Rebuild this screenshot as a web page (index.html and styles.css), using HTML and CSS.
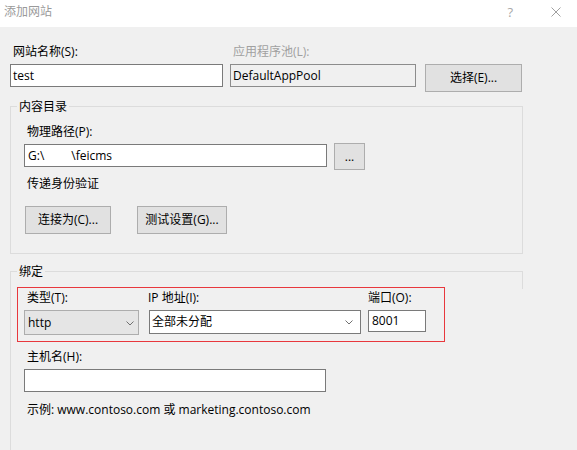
FILE: index.html
```html
<!DOCTYPE html>
<html lang="zh-CN">
<head>
<meta charset="utf-8">
<title>添加网站</title>
<link rel="stylesheet" href="styles.css">
</head>
<body>
<div class="titlebar">
  <span class="title">添加网站</span>
  <span class="help">?</span>
  <svg class="close" width="10" height="10" viewBox="0 0 10 10"><path d="M0.5 0.5 L9.5 9.5 M9.5 0.5 L0.5 9.5" stroke="#a0a0a0" stroke-width="1" fill="none"/></svg>
</div>
<main class="dialog">
  <div class="site-row">
    <div class="field name-field">
      <label class="lbl">网站名称(S):</label>
      <div class="textbox">test</div>
    </div>
    <div class="field pool-field">
      <label class="lbl disabled">应用程序池(L):</label>
      <div class="textbox readonly">DefaultAppPool</div>
    </div>
    <button class="btn btn-select">选择(E)...</button>
  </div>

  <section class="group group-content">
    <div class="legend">内容目录</div>
    <label class="lbl path-label">物理路径(P):</label>
    <div class="path-row">
      <div class="textbox path-box">G:\<span class="redact"></span>\feicms</div>
      <button class="btn btn-browse">...</button>
    </div>
    <div class="lbl auth-label">传递身份验证</div>
    <div class="btn-row">
      <button class="btn btn-connect">连接为(C)...</button>
      <button class="btn btn-test">测试设置(G)...</button>
    </div>
  </section>

  <section class="group group-binding">
    <div class="legend">绑定</div>
    <div class="highlight">
      <div class="col col-type">
        <label class="lbl">类型(T):</label>
        <div class="select select-type"><span>http</span>
          <svg width="8" height="5" viewBox="0 0 8 5"><polyline points="0.5,0.5 4,4 7.5,0.5" stroke="#707070" fill="none"/></svg>
        </div>
      </div>
      <div class="col col-ip">
        <label class="lbl">IP 地址(I):</label>
        <div class="select select-ip"><span>全部未分配</span>
          <svg width="8" height="5" viewBox="0 0 8 5"><polyline points="0.5,0.5 4,4 7.5,0.5" stroke="#707070" fill="none"/></svg>
        </div>
      </div>
      <div class="col col-port">
        <label class="lbl">端口(O):</label>
        <div class="textbox port-box">8001</div>
      </div>
    </div>
    <label class="lbl host-label">主机名(H):</label>
    <div class="textbox host-box"></div>
    <div class="lbl example">示例: www.contoso.com 或 marketing.contoso.com</div>
  </section>
</main>
</body>
</html>
```

FILE: styles.css
```css
* { box-sizing: border-box; }
html, body { margin: 0; padding: 0; }
body {
  width: 577px;
  height: 450px;
  overflow: hidden;
  background: #f0f0f0;
  font: 12px/16px "Open Sans", "Noto Sans CJK SC", sans-serif;
  color: #000;
}

.titlebar {
  height: 27px;
  background: #fff;
  display: flex;
  align-items: flex-start;
  padding-top: 4px;
}
.title { margin-left: 4px; color: #9a9a9a; flex: 1; }
.help { color: #a8a8a8; margin-right: 38px; font-size: 13px; }
.close { margin: 3px 16px 0 0; }

.dialog { padding: 17px 0 0 10px; }

.lbl { display: block; height: 16px; white-space: nowrap; }
.disabled { color: #a0a0a0; }

.site-row { display: flex; align-items: flex-start; }
.field .lbl { margin-bottom: 4px; }
.name-field { width: 213px; }
.name-field .lbl { padding-left: 3px; }
.pool-field { width: 186px; margin-left: 7px; }
.pool-field .lbl { padding-left: 3px; }

.textbox {
  height: 23px;
  border: 1px solid #7a7a7a;
  background: #fff;
  padding: 0 2px;
  line-height: 21px;
  white-space: nowrap;
}
.readonly { background: #f0f0f0; border-color: #8c8c8c; }

.btn {
  font: inherit;
  color: #000;
  background: #e1e1e1;
  border: 1px solid #adadad;
  padding: 0;
  line-height: 16px;
}
.btn-select { margin: 20px 0 0 9px; width: 97px; height: 28px; }

.group { width: 513px; border: 1px solid #dcdcdc; }
.legend {
  width: fit-content;
  height: 16px;
  padding: 0 2px;
  background: #f0f0f0;
  margin-top: -8px;
}

.group-content { margin-top: 14px; padding: 0 0 19px 13px; }
.group-content .legend { margin-left: -7px; }
.path-label { margin-top: 9px; margin-bottom: 4px; padding-left: 3px; }
.path-row { display: flex; align-items: flex-start; }
.path-box { width: 303px; padding-left: 3px; }
.redact { display: inline-block; width: 27px; }
.btn-browse { width: 31px; height: 27px; margin: -1px 0 0 7px; }
.auth-label { margin-top: 6px; padding-left: 3px; }
.btn-row { display: flex; margin-top: 14px; }
.btn-connect { width: 86px; height: 28px; margin-left: 1px; }
.btn-test { width: 90px; height: 28px; margin-left: 26px; }

.group-binding {
  position: relative;
  margin-top: 17px;
  border-right: none;
  border-bottom: none;
  padding: 0 0 32px 6px;
}
.group-binding::after {
  content: "";
  position: absolute;
  top: -1px;
  right: 0;
  width: 1px;
  height: 18px;
  background: #dcdcdc;
}

.highlight {
  width: 428px;
  margin-top: 7px;
  border: 1px solid #e8383d;
  padding: 2px 0 6px 6px;
  display: flex;
  align-items: flex-start;
}
.col .lbl { margin-bottom: 4px; }
.col-type { width: 115px; }
.col-type .lbl { padding-left: 3px; }
.col-ip { width: 212px; margin-left: 10px; }
.col-ip .lbl { margin-left: -1px; }
.col-port { width: 58px; margin-left: 7px; }

.select {
  height: 25px;
  display: flex;
  align-items: center;
  justify-content: space-between;
  white-space: nowrap;
}
.select svg { flex: none; margin-top: 1px; }
.select-type {
  background: #e5e5e5;
  border: 1px solid #adadad;
  padding: 0 4px 0 3px;
}
.select-ip {
  height: 24px;
  background: #fff;
  border: 1px solid #7a7a7a;
  padding: 0 7px 0 2px;
}
.port-box { height: 22px; margin-top: 1px; padding-left: 3px; line-height: 20px; }

.host-label { margin: 7px 0 4px 10px; }
.host-box { width: 302px; margin-left: 7px; }
.example { margin: 10px 0 0 10px; }
```
